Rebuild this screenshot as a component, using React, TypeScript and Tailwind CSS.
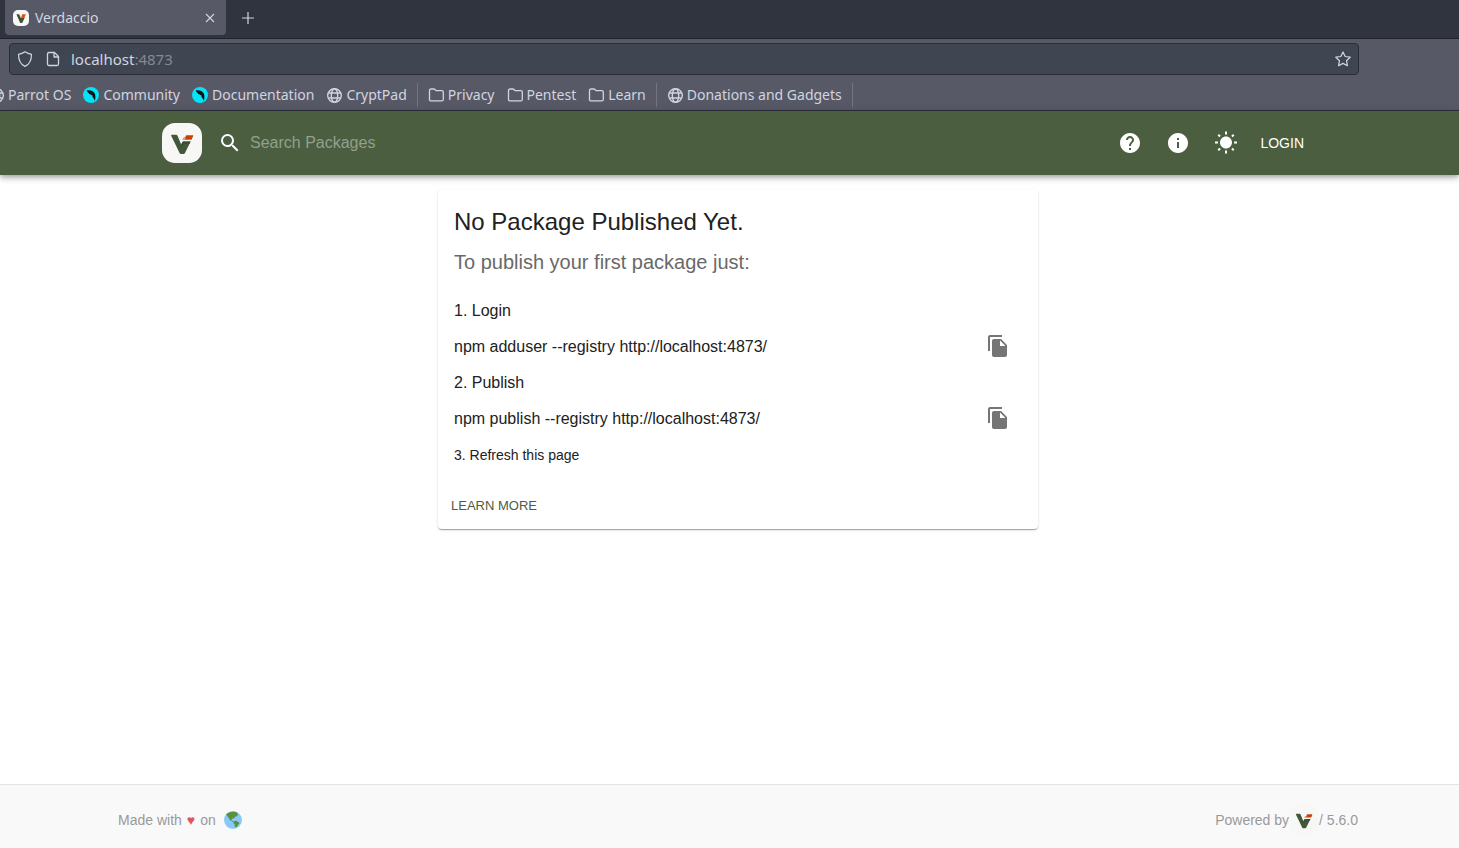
import type { ReactNode } from "react";
import { MdFileCopy, MdHelp, MdInfo, MdSearch, MdWbSunny } from "react-icons/md";

function Mark() {
  return (
    <>
      <path d="M10 11.800h4.200c.6 0 1 .3 1.200.8l3.800 9 1-2c.4-.8.800-1.100 1.500-1.100h6.900l-5.600 11.600c-.3.600-.7.900-1.300.900h-2.800c-.6 0-1-.3-1.200-.8L9.200 12.800c-.2-.5.100-1 .8-1z" fill="#43573a" />
      <path d="M20.200 19.600c.4-.8.800-1.100 1.500-1.100h6.900l-1.200 2.500h-5.600l-1.400 3-1.200-2.400z" fill="#3c4f33" />
      <path d="M24.200 12.200h6.400c.6 0 .8.4.6.8l-1.300 2.900c-.3.600-.7.900-1.300.900h-8.200l1.500-2.300h1.200z" fill="#cd4000" />
      <path d="M20.400 16.800l1.300-2h2l-1 2z" fill="#f0a58c" />
    </>
  );
}

function Logo({ className }: { className: string }) {
  return (
    <svg viewBox="0 0 40 40" className={className} aria-hidden="true">
      <rect width="40" height="40" rx="13" fill="#f7f8f6" />
      <Mark />
    </svg>
  );
}

function Favicon() {
  return (
    <svg viewBox="0 0 16 16" className="size-4 shrink-0" aria-hidden="true">
      <rect width="16" height="16" rx="5" fill="#f7f8f6" />
      <path d="M3.400 4.200h2.800l1.700 3.900.8-.9h3.200l-2.700 5.800H7.200z" fill="#405236" />
      <path d="M9.200 4.300h3.700l-1.200 2.700H8.300z" fill="#e2500f" />
    </svg>
  );
}

function Globe() {
  return (
    <svg viewBox="0 0 16 16" className="size-4 shrink-0" fill="none" stroke="currentColor" strokeWidth="1.4" aria-hidden="true">
      <circle cx="8.500" cy="8.500" r="6.800" />
      <ellipse cx="8.500" cy="8.500" rx="3.200" ry="6.800" />
      <path d="M2.500 6h12M2.500 11h12" />
    </svg>
  );
}

function Folder() {
  return (
    <svg viewBox="0 0 16 16" className="size-4 shrink-0" fill="none" stroke="currentColor" strokeWidth="1.300" aria-hidden="true">
      <path d="M3 2h2.800c.5 0 .9.2 1.200.5l1 1.100h5.800c.9 0 1.500.6 1.500 1.500v7.300c0 .9-.6 1.500-1.500 1.500H3c-.9 0-1.500-.6-1.500-1.500V3.500C1.500 2.600 2.100 2 3 2z" />
    </svg>
  );
}

function Parrot() {
  return (
    <svg viewBox="0 0 16 16" className="size-4 shrink-0" aria-hidden="true">
      <circle cx="8" cy="8" r="8" fill="#05e3f4" />
      <path d="M3.800 3.300c3-.5 5.800.4 7.300 2.200 1.100 1.400 1.200 2.600 1.300 4 .1 1.600-.1 3-.7 4.400-.2-1.100-.6-1.900-1.400-2.800-.7-.8-1-1.700-.8-2.900-.9.300-1.700-.1-2-.9-.9.100-1.400-.4-1.600-1.100-1-.5-1.800-1.500-2.100-2.900z" fill="#081014" />
    </svg>
  );
}

function Bookmark({ icon, children }: { icon: ReactNode; children: ReactNode }) {
  return (
    <a href="#" className="flex items-center gap-1 whitespace-nowrap">
      {icon}
      {children}
    </a>
  );
}

function Divider() {
  return <span className="h-6 w-px bg-[#74757f]" />;
}

function BrowserChrome() {
  return (
    <div className="font-['Noto_Sans','Open_Sans',sans-serif] text-[14px] leading-5 text-[#d0d5e0]">
      <div className="flex h-[39px] items-start border-b border-[#20232b] bg-[#2f343f] pl-[5px]">
        <div className="flex h-[35px] w-[221px] items-center gap-1.5 rounded-b bg-[#585966] px-2">
          <Favicon />
          <span className="grow">Verdaccio</span>
          <button type="button" aria-label="Close tab" className="flex size-4 items-center justify-center">
            <svg viewBox="0 0 16 16" className="size-4" stroke="currentColor" strokeWidth="1.1" aria-hidden="true">
              <path d="M4 4l8 8M12 4l-8 8" />
            </svg>
          </button>
        </div>
        <button type="button" aria-label="New tab" className="ml-3.5 flex h-[35px] items-center">
          <svg viewBox="0 0 16 16" className="size-4" stroke="currentColor" strokeWidth="1.2" aria-hidden="true">
            <path d="M2 8h12M8 2v12" />
          </svg>
        </button>
      </div>
      <div className="h-[72px] overflow-hidden border-b border-[#2c2f3a] bg-[#585966] pt-1">
        <div className="mr-[100px] ml-[9px] flex h-8 items-center rounded border border-[#2b2e39] bg-[#404552] px-[7px]">
          <svg viewBox="0 0 16 16" className="size-4 shrink-0" fill="none" stroke="currentColor" strokeWidth="1.2" strokeLinejoin="round" aria-hidden="true">
            <path d="M8 .8c2 1.300 4 2.100 6.500 2.600 0 5.600-1.800 9.600-6.500 12-4.700-2.400-6.500-6.400-6.500-12C4 2.900 6 2.100 8 .8z" />
          </svg>
          <svg viewBox="0 0 16 16" className="ml-3 size-4 shrink-0" fill="none" stroke="currentColor" strokeWidth="1.3" strokeLinejoin="round" aria-hidden="true">
            <path d="M4 1.500h5.500l4 4v7.500c0 .9-.6 1.500-1.500 1.500H4c-.9 0-1.500-.6-1.500-1.500V3c0-.9.6-1.500 1.500-1.500z" />
            <path d="M9 1.500V6h4.500" />
          </svg>
          <div className="ml-2.5 grow text-[15px]">
            localhost<span className="text-[#858992]">:4873</span>
          </div>
          <button type="button" aria-label="Bookmark this page">
            <svg viewBox="0 0 16 16" className="size-4" fill="none" stroke="currentColor" strokeWidth="1.2" strokeLinejoin="round" aria-hidden="true">
              <path d="M8 .9l2.200 4.600 5 .7-3.700 3.500.9 5L8 12.400l-4.400 2.300.9-5L.8 6.200l5-.7z" />
            </svg>
          </button>
        </div>
        <nav aria-label="Bookmarks" className="-ml-3 flex h-10 items-center gap-3">
          <Bookmark icon={<Globe />}>Parrot OS</Bookmark>
          <Bookmark icon={<Parrot />}>Community</Bookmark>
          <Bookmark icon={<Parrot />}>Documentation</Bookmark>
          <div className="flex items-center gap-2.5">
            <Bookmark icon={<Globe />}>CryptPad</Bookmark>
            <Divider />
            <Bookmark icon={<Folder />}>Privacy</Bookmark>
          </div>
          <Bookmark icon={<Folder />}>Pentest</Bookmark>
          <div className="flex items-center gap-2.5">
            <Bookmark icon={<Folder />}>Learn</Bookmark>
            <Divider />
            <Bookmark icon={<Globe />}>Donations and Gadgets</Bookmark>
            <Divider />
          </div>
        </nav>
      </div>
    </div>
  );
}

function Header() {
  return (
    <header className="z-10 bg-[#4b5e40] pl-[17px] shadow-[0_2px_4px_-1px_rgba(0,0,0,0.2),0_4px_5px_0_rgba(0,0,0,0.14),0_1px_10px_0_rgba(0,0,0,0.12)]">
      <div className="mx-auto flex h-16 max-w-[1152px] items-center text-white">
        <a href="#" aria-label="Verdaccio home">
          <Logo className="size-10" />
        </a>
        <label className="ml-4 flex grow items-center gap-2">
          <MdSearch className="size-6" aria-hidden="true" />
          <input
            type="search"
            placeholder="Search Packages"
            aria-label="Search Packages"
            className="grow bg-transparent text-base outline-none placeholder:text-[#93a08c]"
          />
        </label>
        <button type="button" aria-label="Help" className="p-3">
          <MdHelp className="size-6" />
        </button>
        <button type="button" aria-label="Information" className="p-3">
          <MdInfo className="size-6" />
        </button>
        <button type="button" aria-label="Switch theme" className="p-3">
          <MdWbSunny className="size-6" />
        </button>
        <button type="button" className="px-2.5 text-sm">
          LOGIN
        </button>
      </div>
    </header>
  );
}

function Step({ children }: { children: ReactNode }) {
  return <div className="flex h-9 items-center pt-0.5">{children}</div>;
}

function Command({ text }: { text: string }) {
  return (
    <div className="flex h-9 items-center justify-between">
      <span className="pt-0.5">{text}</span>
      <button type="button" aria-label={`Copy ${text}`} className="p-3 text-[#757575]">
        <MdFileCopy className="size-6" />
      </button>
    </div>
  );
}

function Earth() {
  return (
    <svg viewBox="0 0 18 18" className="size-[18px]" role="img" aria-label="Earth">
      <circle cx="9" cy="9" r="9" fill="#88c9f9" />
      <path d="M2.200 3.300C3.900 1.600 6 .8 8.600.7c1.800-.1 3.500.300 5 1.200l-.3 1.100 1 .8-1.600 1.400-1.500.5-1.200 1.600-1.900.4-.7 1.400 1.600.8 1.300 1.200-.8.2-1.900-1.300-1.900-1.300-.9-2-1.800-1.700z" fill="#5c913b" />
      <path d="M9.600 10.400l2.500-.6 3 1.600.3 1.200-1.300 1.200-.9 1.700-1.800 1.100-.8-1.800.1-1.400-1.300-1.500z" fill="#5c913b" />
    </svg>
  );
}

export default function App() {
  return (
    <div className="flex min-h-screen flex-col bg-white font-['Liberation_Sans',Arial,sans-serif]">
      <BrowserChrome />
      <Header />
      <main className="grow pt-[15px] pb-10 pl-[17px]">
        <section className="mx-auto max-w-[600px] rounded bg-white px-4 pt-4 pb-[7px] text-[#212121] shadow-[0_2px_1px_-1px_rgba(0,0,0,0.2),0_1px_1px_0_rgba(0,0,0,0.14),0_1px_3px_0_rgba(0,0,0,0.12)]">
          <h1 className="text-2xl leading-8">No Package Published Yet.</h1>
          <p className="mt-2 text-xl leading-8 text-[#696969]">To publish your first package just:</p>
          <div className="mt-3.5 text-base">
            <Step>1. Login</Step>
            <Command text="npm adduser --registry http://localhost:4873/" />
            <Step>2. Publish</Step>
            <Command text="npm publish --registry http://localhost:4873/" />
            <Step>
              <span className="text-sm">3. Refresh this page</span>
            </Step>
          </div>
          <a href="#" className="mt-[18px] -ml-2 flex h-8 w-fit items-center px-[5px] text-[13px] text-[#4b5e40]">
            LEARN MORE
          </a>
        </section>
      </main>
      <footer className="h-16 overflow-hidden border-t border-[#e3e3e3] bg-[#f9f9f9] pt-[7px] pl-[17px] text-sm text-[#999999]">
        <div className="mx-auto flex h-14 max-w-[1240px] items-center justify-between">
          <div className="flex items-center">
            <span>Made with</span>
            <span className="mx-[5px] text-[#e25555]">♥</span>
            <span className="mr-2">on</span>
            <Earth />
          </div>
          <div className="flex items-center">
            <span>Powered by</span>
            <Logo className="size-[30px]" />
            <span>/ 5.6.0</span>
          </div>
        </div>
      </footer>
    </div>
  );
}
